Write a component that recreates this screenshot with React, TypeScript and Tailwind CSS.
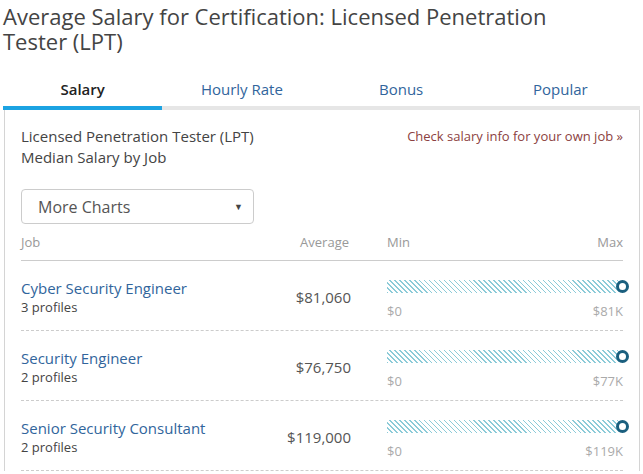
const ROWS = [
  { job: 'Cyber Security Engineer', profiles: '3 profiles', avg: '$81,060', max: '$81K' },
  { job: 'Security Engineer', profiles: '2 profiles', avg: '$76,750', max: '$77K' },
  { job: 'Senior Security Consultant', profiles: '2 profiles', avg: '$119,000', max: '$119K' },
];

const TABS = ['Salary', 'Hourly Rate', 'Bonus', 'Popular'];

const App = () => {
  return (
    <div className="w-[643px] h-[474px] overflow-hidden bg-white font-['Open_Sans',sans-serif] text-[#333]">
      <h1 className="pl-[3px] pt-[4px] text-[22px] leading-[25px] text-[#444] font-normal w-[600px]">
        Average Salary for Certification: Licensed Penetration Tester (LPT)
      </h1>

      <div className="mt-[25px] ml-[3px] w-[637px]">
        <div className="grid grid-cols-4">
          {TABS.map((t, i) => (
            <div
              key={t}
              className={
                i === 0
                  ? 'text-center text-[15px] leading-[20px] pb-[7px] font-semibold text-[#222] border-b-4 border-[#1ca3e2]'
                  : 'text-center text-[15px] leading-[20px] pb-[7px] text-[#31659c] border-b-4 border-[#e6e6e6]'
              }
            >
              {t}
            </div>
          ))}
        </div>

        <div className="ml-[1px] border-x border-[#d4d4d4] px-[16px] pt-[16px]">
          <div className="flex justify-between leading-[21px]">
            <div className="text-[15px] text-[#444]">
              <div>Licensed Penetration Tester (LPT)</div>
              <div>Median Salary by Job</div>
            </div>
            <div className="text-[#8c4141] text-[13px]">Check salary info for your own job »</div>
          </div>

          <div className="mt-[21px] w-[233px] h-[35px] rounded-[4px] border border-[#ccc] flex items-center justify-between pl-[16px] pr-[10px]">
            <span className="text-[16px] text-[#555]">More Charts</span>
            <span className="text-[9px] text-[#444]">▼</span>
          </div>

          <div className="mt-[8px] flex items-center text-[13px] leading-[20px] text-[#999] border-b border-[#ccc] pb-[8px]">
            <div className="flex-1">Job</div>
            <div className="w-[120px] text-right pr-[2px]">Average</div>
            <div className="ml-[36px] w-[236px] flex justify-between">
              <span>Min</span>
              <span>Max</span>
            </div>
          </div>

          {ROWS.map((r) => (
            <div key={r.job} className="flex items-center h-[70px] border-b border-dashed border-[#ccc]">
              <div className="flex-1 pt-[2px]">
                <div className="text-[15px] leading-[20px] text-[#31659c]">{r.job}</div>
                <div className="text-[13px] leading-[18px] text-[#444]">{r.profiles}</div>
              </div>
              <div className="w-[120px] text-right text-[15px] text-[#555] pt-[4px]">{r.avg}</div>
              <div className="ml-[36px] w-[236px] pt-[8px]">
                <div className="relative h-[13px] mr-[4px] bg-[image:repeating-linear-gradient(45deg,#8ccbd8_0_1px,transparent_1px_3.5px)]">
                  <div className="absolute right-[-10px] top-[0px] w-[13px] h-[13px] rounded-full border-[3px] border-[#1b5f7e] bg-white" />
                </div>
                <div className="mt-[9px] flex justify-between text-[13px] leading-[18px] text-[#aaa]">
                  <span>$0</span>
                  <span>{r.max}</span>
                </div>
              </div>
            </div>
          ))}
        </div>
      </div>
    </div>
  );
};

export default App;
